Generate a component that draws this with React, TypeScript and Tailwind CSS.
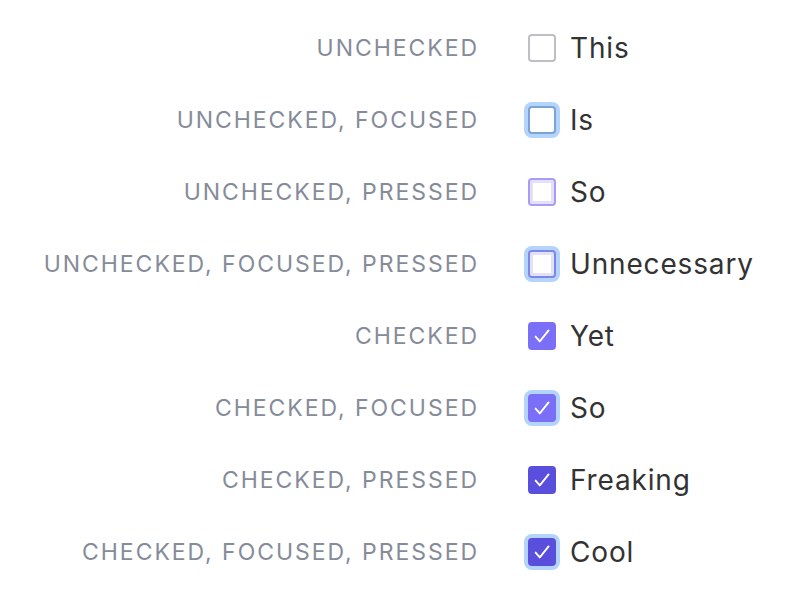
import React from "react";

type Row = {
  label: string;
  text: string;
  checked: boolean;
  focused: boolean;
  pressed: boolean;
};

const rows: Row[] = [
  { label: "UNCHECKED", text: "This", checked: false, focused: false, pressed: false },
  { label: "UNCHECKED, FOCUSED", text: "Is", checked: false, focused: true, pressed: false },
  { label: "UNCHECKED, PRESSED", text: "So", checked: false, focused: false, pressed: true },
  { label: "UNCHECKED, FOCUSED, PRESSED", text: "Unnecessary", checked: false, focused: true, pressed: true },
  { label: "CHECKED", text: "Yet", checked: true, focused: false, pressed: false },
  { label: "CHECKED, FOCUSED", text: "So", checked: true, focused: true, pressed: false },
  { label: "CHECKED, PRESSED", text: "Freaking", checked: true, focused: false, pressed: true },
  { label: "CHECKED, FOCUSED, PRESSED", text: "Cool", checked: true, focused: true, pressed: true },
];

function boxClass(r: Row) {
  let cls = "flex h-7 w-7 shrink-0 items-center justify-center rounded-[4px] border-2 ";
  if (r.checked) {
    cls += r.pressed ? "border-[#5a4edd] bg-[#5a4edd] " : "border-[#7a6ff6] bg-[#7a6ff6] ";
  } else if (r.pressed) {
    cls += r.focused
      ? "border-[#7d86ea] bg-white shadow-[inset_0_0_0_3px_#e3e1f5] "
      : "border-[#a99cf6] bg-white shadow-[inset_0_0_0_3px_#e3e1f5] ";
  } else {
    cls += r.focused ? "border-[#7da2d8] bg-white " : "border-[#bdbec6] bg-white ";
  }
  if (r.focused) cls += "ring-4 ring-[#b3d4fc]";
  return cls;
}

function Checkbox({ row }: { row: Row }) {
  return (
    <div className={boxClass(row)}>
      {row.checked && (
        <svg width="28" height="28" viewBox="0 0 28 28" className="-m-[2px]" fill="none">
          <path
            d="M7.6 14.6 L11.8 19.4 L20.6 8.4"
            stroke="white"
            strokeWidth="1.9"
            strokeLinecap="round"
            strokeLinejoin="round"
          />
        </svg>
      )}
    </div>
  );
}

export default function App() {
  return (
    <div className="flex min-h-[600px] w-[800px] flex-col bg-white py-3 font-['Inter',sans-serif]">
      {rows.map((row, i) => (
        <div key={i} className="flex h-[72px] items-center">
          <span className="w-[479px] text-right text-[23px] tracking-[0.085em] text-[#868b99]">
            {row.label}
          </span>
          <div className="ml-[49px]">
            <Checkbox row={row} />
          </div>
          <span className="ml-[14px] text-[28px] tracking-[0.03em] text-[#333333]">{row.text}</span>
        </div>
      ))}
    </div>
  );
}
